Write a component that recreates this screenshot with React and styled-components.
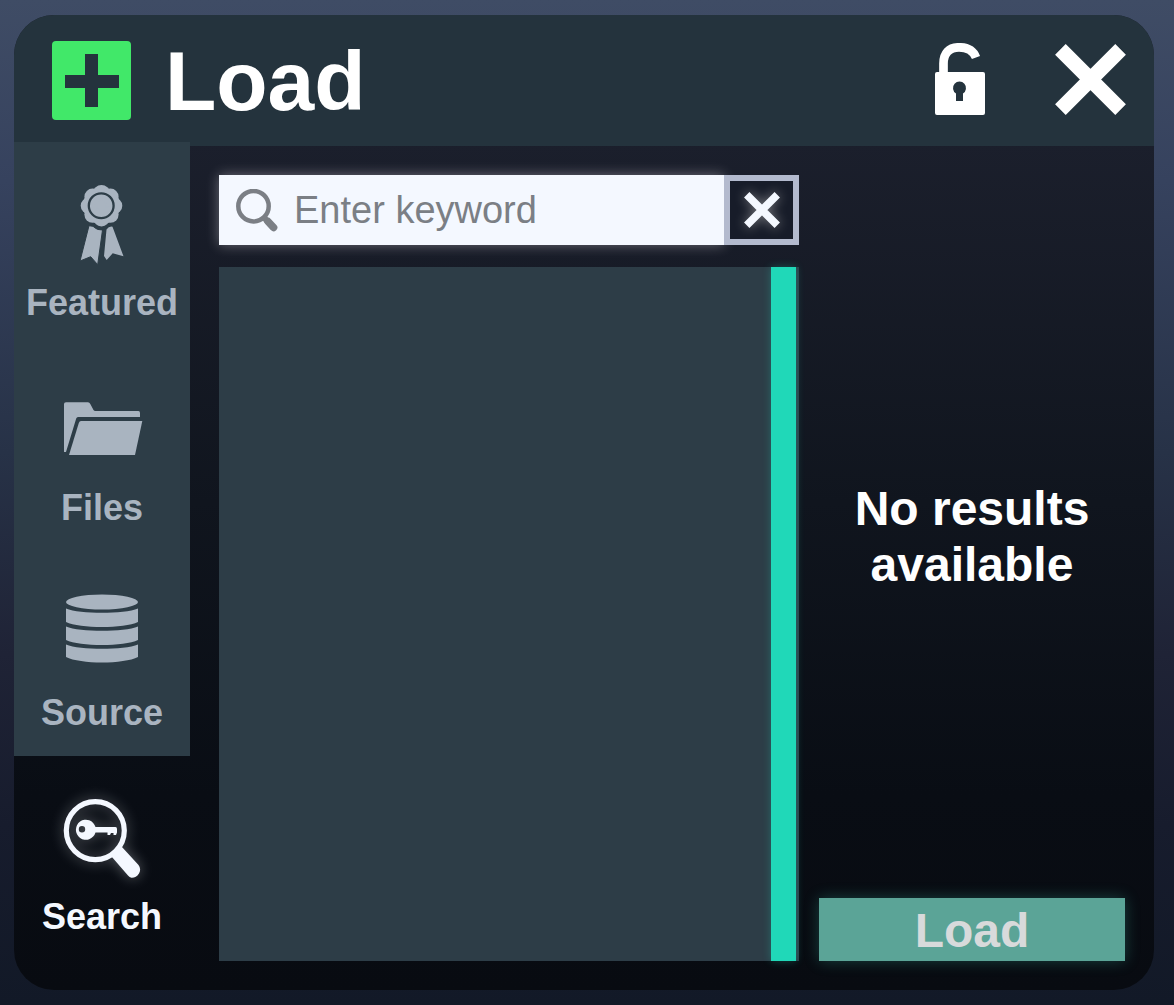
import React, { useState } from "react";
import styled, { createGlobalStyle } from "styled-components";

const GlobalStyle = createGlobalStyle`
  *, *::before, *::after { box-sizing: border-box; }
  body {
    margin: 0;
    font-family: "Liberation Sans", Arial, sans-serif;
    background: #131a28;
  }
  button, input { font-family: inherit; }
  svg { display: block; }
`;

const Page = styled.div`
  display: flex;
  min-height: 100vh;
  padding: 15px 20px 15px 14px;
  background: linear-gradient(#3f4c65 0%, #36425e 18%, #273247 45%, #1f2336 65%, #171c2d 82%, #121927 100%);
`;

const Dialog = styled.section`
  flex: 1;
  min-width: 0;
  display: flex;
  flex-direction: column;
  overflow: hidden;
  padding-bottom: 29px;
  border-radius: 40px;
  background: linear-gradient(#1b1f2c 13%, #10151e 50%, #090d14 80%, #080b11 100%);
`;

const Header = styled.header`
  display: flex;
  align-items: center;
  height: 131px;
  padding: 0 28px 0 38px;
  background: #24333d;
`;

const Title = styled.h1`
  flex: 1;
  margin: 0 0 0 34px;
  font-size: 84px;
  line-height: 96px;
  font-weight: 700;
  color: #fff;
`;

const HeaderActions = styled.div`
  display: flex;
  align-items: center;
  gap: 70px;
  padding-bottom: 3px;
`;

const IconButton = styled.button`
  padding: 0;
  border: 0;
  background: none;
  color: #fff;
  cursor: pointer;
`;

const Body = styled.div`
  flex: 1;
  display: flex;
`;

const Sidebar = styled.nav`
  display: flex;
  flex-direction: column;
  width: 176px;
  margin-top: -4px;
`;

const Tab = styled.button`
  flex: 1;
  display: flex;
  flex-direction: column;
  align-items: center;
  gap: 18px;
  padding: 42px 0 22px;
  border: 0;
  font-size: 36px;
  line-height: 42px;
  font-weight: 700;
  cursor: pointer;
  color: ${(p) => (p.$active ? "#f4f8ff" : "#a9b4c0")};
  background: ${(p) => (p.$active ? "transparent" : "#2d3d47")};

  svg {
    overflow: visible;
    filter: ${(p) => (p.$active ? "drop-shadow(0 0 7px rgba(244, 248, 255, 0.35))" : "none")};
  }
`;

const Main = styled.main`
  flex: 1;
  display: grid;
  grid-template-columns: minmax(0, 1fr) 306px;
  gap: 20px;
  padding: 29px 29px 0;
`;

const Finder = styled.div`
  display: flex;
  flex-direction: column;
  gap: 22px;
`;

const SearchBar = styled.form`
  display: flex;
  height: 70px;
`;

const SearchField = styled.label`
  flex: 1;
  min-width: 0;
  display: flex;
  align-items: center;
  gap: 16px;
  padding-left: 17px;
  color: #7b7f85;
  background: #f4f8ff;
  box-shadow: 0 0 12px rgba(235, 230, 235, 0.4);
`;

const SearchInput = styled.input`
  flex: 1;
  min-width: 0;
  height: 100%;
  padding: 0;
  border: 0;
  outline: 0;
  background: transparent;
  color: #24333d;
  font-size: 38px;

  &::placeholder {
    color: #7b7f85;
    opacity: 1;
  }
`;

const ClearButton = styled.button`
  display: flex;
  align-items: center;
  justify-content: center;
  width: 75px;
  padding: 0;
  border: 6px solid #b3bace;
  background: #171c29;
  color: #f4f8ff;
  cursor: pointer;

  svg {
    overflow: visible;
    filter: drop-shadow(0 0 6px rgba(244, 240, 235, 0.45));
  }
`;

const Results = styled.div`
  flex: 1;
  display: flex;
  justify-content: flex-end;
  padding-right: 3px;
  background: #2d3d47;
`;

const ScrollThumb = styled.div`
  width: 25px;
  background: #20d8b8;
  box-shadow: 0 0 8px rgba(32, 216, 184, 0.3);
`;

const Preview = styled.aside`
  display: flex;
  flex-direction: column;
`;

const Message = styled.p`
  flex: 1;
  display: flex;
  align-items: center;
  justify-content: center;
  margin: 0;
  font-size: 48px;
  line-height: 56px;
  font-weight: 700;
  text-align: center;
  color: #fff;
`;

const LoadButton = styled.button`
  height: 63px;
  padding: 2px 0 0;
  border: 0;
  font-size: 48px;
  line-height: 56px;
  font-weight: 700;
  color: #d8dadb;
  background: #5ba497;
  box-shadow: 0 0 14px rgba(60, 190, 170, 0.3);
`;

const PlusIcon = () => (
  <svg width="79" height="79" viewBox="0 0 79 79" aria-hidden="true">
    <rect width="79" height="79" rx="4" fill="#41e869" />
    <path d="M33 13H46V34H67V47H46V66H33V47H13V34H33Z" fill="#24333d" />
  </svg>
);

const UnlockIcon = () => (
  <svg width="50" height="72" viewBox="0 0 50 72" aria-hidden="true">
    <path d="M8.5 32V20.5C8.5 10 14 4.3 24 4.3C33 4.3 38.500 8 41 14.500" fill="none" stroke="currentColor" strokeWidth="8.7" />
    <path
      fillRule="evenodd"
      fill="currentColor"
      d="M2 29H48Q50 29 50 31V70Q50 72 48 72H2Q0 72 0 70V31Q0 29 2 29ZM21 50.500V58H28V50.500A6.500 6.500 0 1 0 21 50.500Z"
    />
  </svg>
);

const CrossIcon = ({ size }) => (
  <svg width={size} height={size} viewBox="0 0 71 71" aria-hidden="true">
    <path d="M5.400 5.400L65.600 65.600M65.600 5.400L5.400 65.600" stroke="currentColor" strokeWidth="15" />
  </svg>
);

const SearchIcon = () => (
  <svg width="42" height="43" viewBox="0 0 42 43" fill="none" stroke="currentColor" aria-hidden="true">
    <circle cx="17.5" cy="17.2" r="15.2" strokeWidth="4.500" />
    <path d="M27.500 28L37.500 39" strokeWidth="6" />
    <path d="M32 32.500L37.600 38.500" strokeWidth="7.500" strokeLinecap="round" />
  </svg>
);

const petals = [0, 1, 2, 3, 4, 5, 6, 7].map((i) => {
  const angle = (i * Math.PI) / 4 - Math.PI / 2;
  return { cx: 39.5 + 12.6 * Math.cos(angle), cy: 21.7 + 12.6 * Math.sin(angle) };
});

const RibbonIcon = () => (
  <svg width="80" height="80" viewBox="0 0 80 80" fill="currentColor" aria-hidden="true">
    <circle cx="39.5" cy="21.7" r="18.500" />
    {petals.map((p, i) => (
      <circle key={i} cx={p.cx} cy={p.cy} r="8.200" />
    ))}
    <circle cx="39.2" cy="21.7" r="12.400" fill="none" stroke="#2d3d47" strokeWidth="2.300" />
    <path d="M27 41.700L31 42.300Q35 46.600 40.500 46L35.700 80.700L28.700 72.700L18 77Z" stroke="#2d3d47" strokeWidth="1" />
    <path d="M44.500 45.500Q47 42 50.500 42.700L61.500 72.300L50.700 69.300L44.700 76L42 72Z" />
  </svg>
);

const FolderIcon = () => (
  <svg width="80" height="80" viewBox="0 0 80 80" fill="currentColor" aria-hidden="true">
    <path d="M2 15Q2 13.300 4 13.300H26Q27.500 13.300 28.300 15L31.500 21Q32 22 33.500 22H76.500Q78 22 78 24V28H16Q14.700 28 14.200 29.500L4 63H2Z" />
    <path d="M19 32H80.300L73 66H7L16.800 34Q17.500 32 19 32Z" />
  </svg>
);

const DatabaseIcon = () => (
  <svg width="80" height="80" viewBox="0 0 80 80" fill="currentColor" aria-hidden="true">
    <ellipse cx="40" cy="8" rx="36" ry="7.500" />
    <path d="M4 14.500C18 20.300 62 20.300 76 14.500V28C62 34.700 18 34.700 4 28Z" />
    <path d="M4 32.500C18 38.300 62 38.300 76 32.500V46C62 52.700 18 52.700 4 46Z" />
    <path d="M4 50.500C18 56.300 62 56.300 76 50.500V63C62 70.300 18 70.300 4 63Z" />
  </svg>
);

const KeySearchIcon = () => (
  <svg width="80" height="80" viewBox="0 0 80 80" fill="currentColor" aria-hidden="true">
    <circle cx="33.3" cy="32.600" r="29" fill="none" stroke="currentColor" strokeWidth="5.200" />
    <path d="M59.500 48.500L76.500 67Q79.500 71 77 75.500Q74 80 69.500 79.800Q67.500 79.500 66 77.500L49.500 58.500Z" />
    <path
      fillRule="evenodd"
      d="M33.500 29H53.500Q55 29 55 31V34.500L54 37H51.500V35H49L48 37H45.500V34.500H33.500A10 10 0 1 1 33.500 29ZM20 28A3.200 3.200 0 1 0 20 34.400A3.200 3.200 0 1 0 20 28Z"
    />
  </svg>
);

const TABS = [
  { name: "Featured", Icon: RibbonIcon },
  { name: "Files", Icon: FolderIcon },
  { name: "Source", Icon: DatabaseIcon },
  { name: "Search", Icon: KeySearchIcon },
];

export default function App() {
  const [active, setActive] = useState("Search");
  const [keyword, setKeyword] = useState("");

  return (
    <>
      <GlobalStyle />
      <Page>
        <Dialog aria-labelledby="dialog-title">
          <Header>
            <PlusIcon />
            <Title id="dialog-title">Load</Title>
            <HeaderActions>
              <IconButton type="button" aria-label="Unlock">
                <UnlockIcon />
              </IconButton>
              <IconButton type="button" aria-label="Close">
                <CrossIcon size={71} />
              </IconButton>
            </HeaderActions>
          </Header>
          <Body>
            <Sidebar>
              {TABS.map(({ name, Icon }) => (
                <Tab
                  key={name}
                  type="button"
                  $active={name === active}
                  aria-current={name === active ? "page" : undefined}
                  onClick={() => setActive(name)}
                >
                  <Icon />
                  {name}
                </Tab>
              ))}
            </Sidebar>
            <Main>
              <Finder>
                <SearchBar role="search" onSubmit={(e) => e.preventDefault()}>
                  <SearchField htmlFor="keyword">
                    <SearchIcon />
                    <SearchInput
                      id="keyword"
                      type="text"
                      aria-label="Keyword"
                      placeholder="Enter keyword"
                      value={keyword}
                      onChange={(e) => setKeyword(e.target.value)}
                    />
                  </SearchField>
                  <ClearButton type="button" aria-label="Clear" onClick={() => setKeyword("")}>
                    <CrossIcon size={36} />
                  </ClearButton>
                </SearchBar>
                <Results>
                  <ScrollThumb />
                </Results>
              </Finder>
              <Preview>
                <Message>No results available</Message>
                <LoadButton type="button" disabled>
                  Load
                </LoadButton>
              </Preview>
            </Main>
          </Body>
        </Dialog>
      </Page>
    </>
  );
}
